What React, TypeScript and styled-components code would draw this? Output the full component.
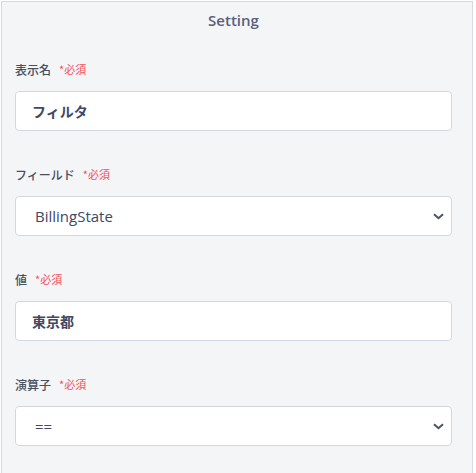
import styled, { createGlobalStyle } from "styled-components";

const GlobalStyle = createGlobalStyle`
  html, body {
    margin: 0;
    padding: 0;
    background: #ffffff;
  }
  body {
    font-family: "Open Sans", "Noto Sans CJK JP", sans-serif;
  }
`;

const Panel = styled.div`
  margin: 1px 0 0 1px;
  width: 472px;
  min-height: 480px;
  border: 1px solid #d5dae1;
  background: #f4f5f7;
  padding: 0 20px 0 13px;
  box-sizing: border-box;
`;

const Title = styled.div`
  height: 36px;
  line-height: 36px;
  text-align: center;
  font-size: 15px;
  font-weight: 600;
  color: #5a6078;
`;

const Form = styled.div`
  display: flex;
  flex-direction: column;
  padding-top: 23px;
`;

const Field = styled.div`
  display: flex;
  flex-direction: column;
  gap: 14px;
  margin-bottom: 35px;
`;

const Label = styled.div`
  display: flex;
  align-items: center;
  gap: 8px;
  height: 16px;
  font-family: "Noto Sans CJK JP", sans-serif;
  font-size: 12px;
  font-weight: 500;
  color: #4a4f5e;
`;

const Required = styled.span`
  font-size: 11px;
  font-weight: 400;
  color: #ef5156;
`;

const TextInput = styled.input`
  height: 40px;
  box-sizing: border-box;
  width: 100%;
  border: 1px solid #d3d8e0;
  border-radius: 4px;
  background: #ffffff;
  padding: 0 16px;
  font-family: "Open Sans", "Noto Sans CJK JP", sans-serif;
  font-size: 14px;
  font-weight: 700;
  color: #424862;
  outline: none;
`;

const SelectWrap = styled.div`
  position: relative;
  height: 40px;
`;

const Select = styled.select`
  appearance: none;
  height: 40px;
  width: 100%;
  box-sizing: border-box;
  border: 1px solid #d3d8e0;
  border-radius: 4px;
  background: #ffffff;
  padding: 0 19px;
  font-family: "Open Sans", "Noto Sans CJK JP", sans-serif;
  font-size: 15px;
  font-weight: 500;
  color: #424862;
  outline: none;
`;

const Chevron = styled.svg`
  position: absolute;
  right: 8px;
  top: 17px;
  pointer-events: none;
`;

function Arrow() {
  return (
    <Chevron width="11" height="7" viewBox="0 0 11 7">
      <path d="M1 1.2 L5.5 5.2 L10 1.2" fill="none" stroke="#4b5167" strokeWidth="2" />
    </Chevron>
  );
}

function App() {
  return (
    <>
      <GlobalStyle />
      <Panel>
        <Title>Setting</Title>
        <Form>
          <Field>
            <Label>
              表示名<Required>*必須</Required>
            </Label>
            <TextInput defaultValue="フィルタ" />
          </Field>
          <Field>
            <Label>
              フィールド<Required>*必須</Required>
            </Label>
            <SelectWrap>
              <Select defaultValue="BillingState">
                <option>BillingState</option>
                <option>BillingCity</option>
              </Select>
              <Arrow />
            </SelectWrap>
          </Field>
          <Field>
            <Label>
              値<Required>*必須</Required>
            </Label>
            <TextInput defaultValue="東京都" />
          </Field>
          <Field>
            <Label>
              演算子<Required>*必須</Required>
            </Label>
            <SelectWrap>
              <Select defaultValue="==">
                <option>==</option>
                <option>!=</option>
              </Select>
              <Arrow />
            </SelectWrap>
          </Field>
        </Form>
      </Panel>
    </>
  );
}

export default App;
